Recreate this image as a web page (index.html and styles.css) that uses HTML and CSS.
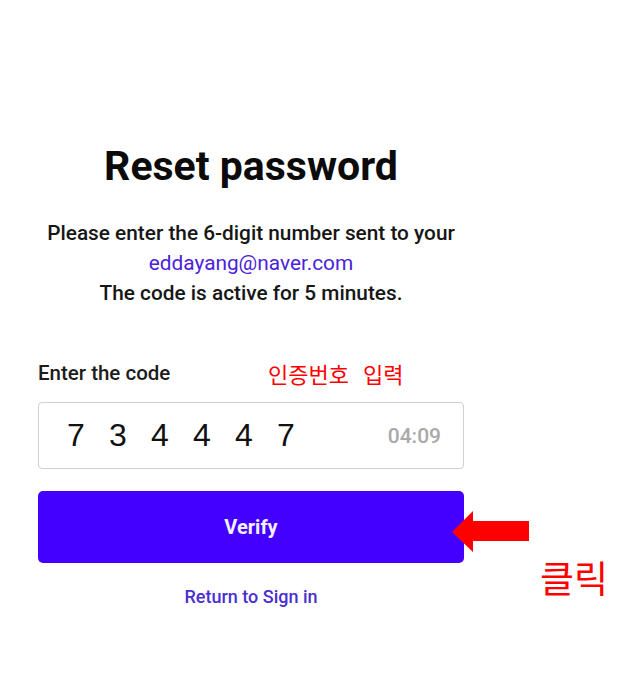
FILE: index.html
```html
<!DOCTYPE html>
<html lang="en">
<head>
<meta charset="utf-8">
<title>Reset password</title>
<link rel="stylesheet" href="styles.css">
</head>
<body>
<main class="card">
  <h1 class="title">Reset password</h1>
  <p class="desc">Please enter the 6-digit number sent to your<br><span class="email">eddayang@naver.com</span><br>The code is active for 5 minutes.</p>
  <div class="label-row">
    <label class="label" for="code">Enter the code</label>
    <span class="note note-input"><span>인증번호</span><span>입력</span></span>
  </div>
  <div class="code-box" id="code">
    <div class="digits">
      <span>7</span><span>3</span><span>4</span><span>4</span><span>4</span><span>7</span>
    </div>
    <span class="timer">04:09</span>
  </div>
  <div class="btn-wrap">
    <button class="verify" type="button">Verify</button>
    <svg class="arrow" width="78" height="42" viewBox="0 0 78 42" aria-hidden="true">
      <polygon points="0,21 21,0 21,10 77,10 77,30 21,30 21,41" fill="#ff0000"/>
    </svg>
    <span class="note note-click">클릭</span>
  </div>
  <a class="back" href="#">Return to Sign in</a>
</main>
</body>
</html>
```

FILE: styles.css
```css
* { box-sizing: border-box; }
html, body { margin: 0; padding: 0; background: #fff; }
body {
  font-family: Roboto, "Noto Sans", "Liberation Sans", sans-serif;
  color: #111;
}
.card {
  width: 426px;
  margin-left: 38px;
  padding-top: 142px;
  display: flex;
  flex-direction: column;
}
.title {
  margin: 0;
  font-size: 41px;
  line-height: 48px;
  font-weight: 700;
  text-align: center;
  color: #0b0b0b;
}
.desc {
  margin: 28px 0 0;
  font-size: 20.8px;
  line-height: 30px;
  font-weight: 500;
  text-align: center;
  color: #161616;
}
.email { color: #4b22db; font-weight: 400; }
.label-row {
  margin-top: 53px;
  display: flex;
  align-items: center;
  height: 24px;
  position: relative;
}
.label {
  font-size: 20.5px;
  line-height: 24px;
  font-weight: 500;
  color: #1c1c1c;
}
.note {
  font-family: "Noto Sans CJK KR", "Noto Sans", sans-serif;
  color: #ff0000;
  font-weight: 400;
  white-space: nowrap;
}
.note-input {
  position: absolute;
  left: 230px;
  top: 0;
  font-size: 22px;
  line-height: 24px;
  display: flex;
  gap: 14px;
}
.code-box {
  margin-top: 17px;
  height: 67px;
  border: 1px solid #d0d0d0;
  border-radius: 4px;
  display: flex;
  align-items: center;
  justify-content: space-between;
  padding: 0 22px 0 28px;
}
.digits {
  display: flex;
  font-family: "Liberation Sans", Arial, sans-serif;
  font-size: 32px;
  color: #111;
}
.digits span { width: 42px; }
.timer {
  font-size: 21px;
  font-weight: 500;
  color: #a9a9a9;
}
.btn-wrap {
  position: relative;
  margin-top: 22px;
}
.verify {
  display: block;
  width: 100%;
  height: 72px;
  border: none;
  border-radius: 5px;
  background: #4400ff;
  color: #f4f0ff;
  font-family: Roboto, "Noto Sans", sans-serif;
  font-size: 20px;
  font-weight: 700;
}
.arrow {
  position: absolute;
  left: 414px;
  top: 20px;
}
.note-click {
  position: absolute;
  left: 502px;
  top: 63px;
  font-size: 37px;
  line-height: 46px;
}
.back {
  align-self: center;
  margin-top: 22px;
  font-size: 18px;
  line-height: 24px;
  font-weight: 500;
  color: #4a2fd0;
  text-decoration: none;
}
```
